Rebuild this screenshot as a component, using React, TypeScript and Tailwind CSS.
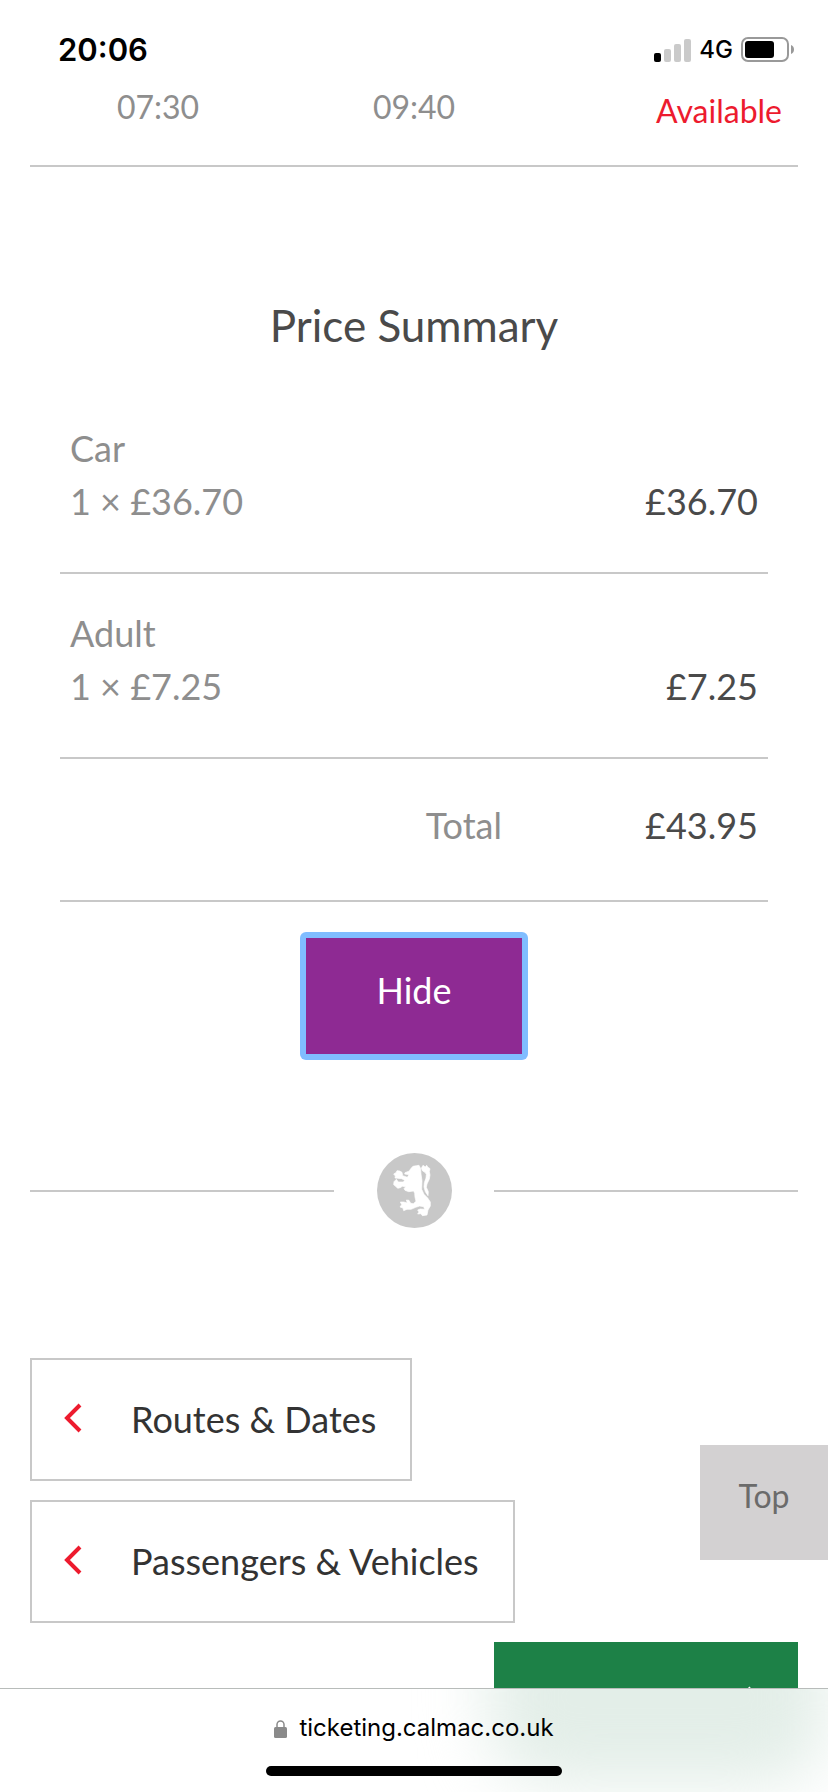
import type { ReactNode } from 'react';
import { clsx } from 'clsx';

interface PriceLine {
    name: string;
    detail: string;
    amount: string;
}

const priceLines: PriceLine[] = [
    { name: 'Car', detail: '1 × £36.70', amount: '£36.70' },
    { name: 'Adult', detail: '1 × £7.25', amount: '£7.25' },
];

const signalBars = [
    { height: 'h-[9px]', active: true },
    { height: 'h-[13px]', active: false },
    { height: 'h-[18px]', active: false },
    { height: 'h-[23px]', active: false },
];

function StatusBar() {
    return (
        <header className="flex h-20 flex-shrink-0 items-start justify-between pt-8 pr-[33px] pl-[58px] font-['Inter',sans-serif] text-black">
            <span className="text-[31px] leading-9 font-semibold">20:06</span>
            <div className="flex h-9 items-center gap-2">
                <div className="flex items-end gap-[3px]">
                    {signalBars.map((bar) => (
                        <span
                            key={bar.height}
                            className={clsx('w-[7px] rounded-[2px]', bar.height, bar.active ? 'bg-black' : 'bg-[#cacaca]')}
                        />
                    ))}
                </div>
                <span className="text-2xl font-medium">4G</span>
                <svg className="h-[26px] w-[54px]" viewBox="0 0 54 26" aria-label="Battery">
                    <rect x="1" y="1" width="46" height="23" rx="6" fill="none" stroke="#999" strokeWidth="2" />
                    <rect x="4" y="4" width="29" height="17" rx="3" fill="#000" />
                    <path d="M50 8c4 1 4 8 0 9z" fill="#999" />
                </svg>
            </div>
        </header>
    );
}

function LionEmblem() {
    return (
        <svg className="h-[75px] w-[75px]" viewBox="50 37 225 225" aria-hidden="true">
            <circle cx="162.500" cy="149.500" r="112.500" fill="#c8c8c8" />
            <path
                fill="#fff"
                stroke="#fff"
                strokeWidth="2"
                strokeLinejoin="round"
                d="M168 75L158 77 151 84 147 91 134 96 133 100 146 102 141 110 127 105 125 95 118 91 110 90 107 96 100 100 105 106 104 112 112 113 124 114 133 119 129 124 114 124 108 116 101 123 100 132 105 136 112 143 120 141 126 137 136 138 131 144 134 149 145 153 160 151 163 158 164 170 167 182 159 189 151 188 146 179 138 178 141 187 130 184 120 184 124 192 119 199 128 202 130 210 140 206 152 206 166 200 178 196 190 198 193 206 180 205 172 208 176 214 172 220 182 219 186 225 200 223 203 208 210 196 210 184 202 172 191 161 184 146 185 120 182 100 181 84 176 74Z"
            />
            <path
                fill="#fff"
                stroke="#fff"
                strokeWidth="2"
                strokeLinejoin="round"
                d="M188 74L195 79 199 74 202 79 209 84 207 93 209 103 207 115 200 130 198 140 204 153 203 165 195 153 191 139 192 126 197 112 198 101 194 95 187 91 183 83Z"
            />
        </svg>
    );
}

function BackLink({ children }: { children: ReactNode }) {
    return (
        <a
            href="#"
            className="flex items-start border-2 border-[#c8c8c8] pt-[33px] pr-[34px] pb-[34px] pl-8 text-[36px] leading-[52px] text-[#333]"
        >
            <svg className="mt-[10px] mr-12 h-[30px] w-[19px]" viewBox="0 0 19 30" aria-hidden="true">
                <path d="M16 2L3 15l13 13" fill="none" stroke="#ed1b2e" strokeWidth="4" />
            </svg>
            {children}
        </a>
    );
}

function SafariBar() {
    return (
        <footer className="relative flex h-[104px] flex-shrink-0 flex-col items-center justify-between overflow-hidden border-t border-[#b8bcba] bg-white pt-[23px] pb-4 font-['Inter',sans-serif] text-black">
            {/* Tint of the green button through the bar */}
            <div className="absolute -top-20 right-0 h-44 w-[340px] rounded-[64px] bg-[#e3eee8] blur-[32px]" />
            <div className="relative flex items-center gap-3 text-2xl leading-8">
                <svg className="h-[19px] w-[13px]" viewBox="0 0 13 19" aria-hidden="true">
                    <path d="M3 9V5.500a3.500 3.500 0 0 1 7 0V9" fill="none" stroke="#8a8a8a" strokeWidth="1.500" />
                    <rect y="8" width="13" height="11" rx="1.500" fill="#8a8a8a" />
                </svg>
                <span>ticketing.calmac.co.uk</span>
            </div>
            <div className="relative h-[10px] w-[296px] rounded-full bg-black" />
        </footer>
    );
}

export default function App() {
    return (
        <div className="flex h-screen flex-col bg-white font-['Lato',sans-serif] text-[#8e8e8e]">
            <StatusBar />

            <main className="relative min-h-0 flex-1 overflow-hidden">
                <div className="px-[30px]">
                    <table className="w-full table-fixed text-[32px] leading-[54px]">
                        <tbody>
                            <tr className="h-[86px] border-b-2 border-[#c8c8c8] align-top">
                                <td className="text-center">07:30</td>
                                <td className="text-center">09:40</td>
                                <td className="pt-1 pr-4 text-right text-[#ed1b2e]">Available</td>
                            </tr>
                        </tbody>
                    </table>

                    <section className="flex flex-col items-center px-[30px] pt-32">
                        <h2 className="text-[44px] leading-[60px] text-[#4a4a4a]">Price Summary</h2>

                        <table className="mt-[34px] w-full text-[36px] leading-[53px]">
                            <tbody>
                                {priceLines.map((line) => (
                                    <tr key={line.name} className="border-b-2 border-[#c8c8c8]">
                                        <td colSpan={2} className="pt-[33px] pb-11 pl-[10px]">
                                            {line.name}
                                            <br />
                                            {line.detail}
                                        </td>
                                        <td className="pr-[10px] pb-11 text-right align-bottom text-[#4a4a4a]">
                                            {line.amount}
                                        </td>
                                    </tr>
                                ))}
                                <tr className="border-b-2 border-[#c8c8c8]">
                                    <td />
                                    <td className="pt-10 pr-[10px] pb-12 text-right">Total</td>
                                    <td className="w-64 pt-10 pr-[10px] pb-12 text-right text-[#4a4a4a]">£43.95</td>
                                </tr>
                            </tbody>
                        </table>

                        <div className="mt-[30px] rounded-[6px] bg-[#80bdff] p-[6px]">
                            <button
                                type="button"
                                className="block w-[216px] bg-[#8e2a93] pt-[26px] pb-[38px] text-[36px] leading-[52px] text-white"
                            >
                                Hide
                            </button>
                        </div>
                    </section>

                    <div className="mt-[93px] flex items-center justify-between">
                        <span className="h-[2px] w-[304px] bg-[#c8c8c8]" />
                        <LionEmblem />
                        <span className="h-[2px] w-[304px] bg-[#c8c8c8]" />
                    </div>

                    <nav className="mt-[130px] flex flex-col items-start gap-[19px]">
                        <BackLink>Routes &amp; Dates</BackLink>
                        <BackLink>Passengers &amp; Vehicles</BackLink>
                        <button
                            type="button"
                            aria-label="Continue"
                            className="flex h-[123px] w-[304px] items-start justify-end self-end bg-[#1d8147] pt-[44px] pr-[34px]"
                        >
                            <svg className="h-[30px] w-[19px]" viewBox="0 0 19 30" aria-hidden="true">
                                <path d="M3 2l13 13L3 28" fill="none" stroke="#fff" strokeWidth="4" />
                            </svg>
                        </button>
                    </nav>
                </div>

                {/* Floating back-to-top */}
                <a
                    href="#"
                    className="absolute right-0 bottom-32 w-32 bg-[#d3d1d2] pt-[31px] pb-11 text-center text-[32px] leading-10 text-[#6b6b6b]"
                >
                    Top
                </a>
            </main>

            <SafariBar />
        </div>
    );
}
